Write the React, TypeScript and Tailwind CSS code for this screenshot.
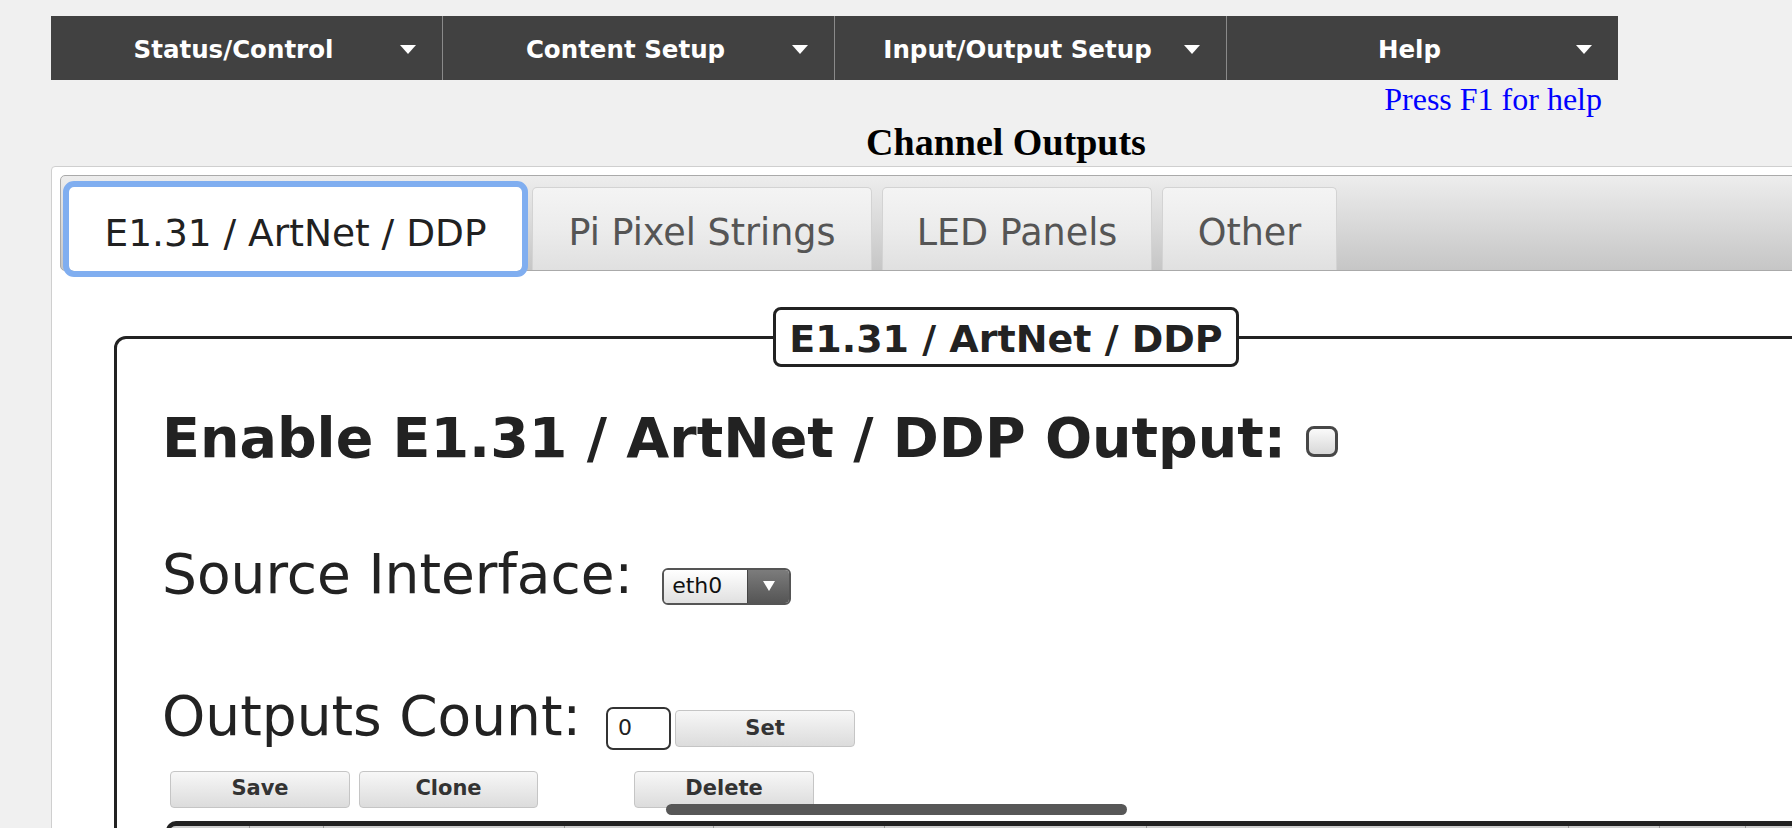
import React from 'react';

const navItems = ['Status/Control', 'Content Setup', 'Input/Output Setup', 'Help'];

const tabs = [
  { label: 'E1.31 / ArtNet / DDP', width: 'w-[453px]', active: true },
  { label: 'Pi Pixel Strings', width: 'w-[340px]', active: false },
  { label: 'LED Panels', width: 'w-[270px]', active: false },
  { label: 'Other', width: 'w-[175px]', active: false },
];

// header cells of the outputs table (only the top edge shows)
const columns = ['w-[80px]', 'w-[74px]', 'w-[241px]', 'w-[149px]', 'w-[171px]', 'w-[262px]', 'w-[422px]', 'w-[91px]', 'w-[86px]', 'w-[200px]'];

const btn =
  'flex items-center justify-center h-[37px] rounded-[4px] border border-[#c5c5c5] bg-gradient-to-b from-[#f7f7f7] to-[#dcdcdc] text-[21px] font-bold text-[#333]';

function Caret() {
  return (
    <svg width="16" height="9" viewBox="0 0 16 9">
      <path d="M0 0h16L8 9z" fill="#fff" />
    </svg>
  );
}

export default function App() {
  return (
    <div className="w-[1792px] h-[828px] overflow-hidden bg-[#f0f0f0] font-['DejaVu_Sans',sans-serif]">
      <nav className="mt-[16px] ml-[51px] w-[1567px] h-[64px] flex bg-[#414141]">
        {navItems.map((item, i) => (
          <div
            key={item}
            className={`flex-1 flex items-center pt-[3px] pl-[16px] pr-[26px] ${i > 0 ? 'border-l border-[#8a8a8a]' : ''}`}
          >
            <span className="flex-1 pt-[2px] text-center text-white font-bold text-[24.5px]">{item}</span>
            <Caret />
          </div>
        ))}
      </nav>

      <div className="mt-[1px] ml-[51px] w-[1567px] pr-[16px] text-right leading-[36px] text-[32px] text-[#0000ff] font-['Liberation_Serif',serif]">
        Press F1 for help
      </div>

      <div className="ml-[51px] w-[1910px]">
        <h2 className="mt-[6px] text-center leading-[38px] text-[38px] font-bold text-black font-['Liberation_Serif',serif]">
          Channel Outputs
        </h2>

        <div className="mt-[5px] border border-[#cfcfcf] rounded-[4px] bg-white p-[8px]">
          {/* tab strip */}
          <div className="flex items-end gap-[10px] pl-[8px] pt-[11px] border border-[#aaaaaa] rounded-[5px] bg-gradient-to-b from-[#ededed] to-[#c6c6c6]">
            {tabs.map((t) =>
              t.active ? (
                <div
                  key={t.label}
                  className={`${t.width} h-[84px] -mb-[1px] pt-[8px] flex items-center justify-center rounded-[5px] bg-white text-[37.5px] text-[#212121] outline-solid outline-[6px] outline-[#80aef0]`}
                >
                  {t.label}
                </div>
              ) : (
                <div
                  key={t.label}
                  className={`${t.width} h-[83px] pt-[8px] flex items-center justify-center rounded-t-[5px] border border-b-0 border-[#d3d3d3] bg-gradient-to-b from-[#f4f4f4] via-[#ececec] to-[#e0e0e0] text-[36.5px] text-[#555]`}
                >
                  {t.label}
                </div>
              )
            )}
          </div>

          <fieldset className="min-w-0 mt-[36px] mx-[54px] border-[3px] border-[#222] rounded-[12px] pl-[45px] pt-[39px] pr-[45px] pb-[40px] text-[#222]">
            <legend className="mx-auto border-[3px] border-[#222] rounded-[8px] bg-white px-[13px] pt-[4px] leading-[50px] text-[38px] font-bold">
              E1.31 / ArtNet / DDP
            </legend>

            <div className="leading-[64px] text-[55.5px] font-bold whitespace-nowrap">
              Enable E1.31 / ArtNet / DDP Output:
              <span className="inline-block align-baseline ml-[20px] w-[32px] h-[31px] rounded-[8px] border-[3px] border-[#474747] bg-gradient-to-b from-[#fafafa] to-[#d8d8d8]" />
            </div>

            <div className="mt-[72px] leading-[64px] text-[55px] whitespace-nowrap">
              Source Interface:
              <span className="inline-flex align-baseline ml-[29px] w-[129px] h-[37px] border-2 border-[#555] rounded-[6px] overflow-hidden">
                <span className="flex-1 flex items-center pl-[8px] text-[22px] leading-none text-[#111] bg-gradient-to-b from-white to-[#e0e0e0]">
                  eth0
                </span>
                <span className="w-[42px] flex items-center justify-center border-l border-[#444] bg-gradient-to-b from-[#7c7c7c] to-[#555]">
                  <svg width="12" height="10" viewBox="0 0 12 10">
                    <path d="M0 0h12L6 10z" fill="#fff" />
                  </svg>
                </span>
              </span>
            </div>

            <div className="mt-[78px] leading-[64px] text-[55px] whitespace-nowrap">
              Outputs Count:
              <span className="inline-flex align-baseline items-center ml-[25px] w-[65px] h-[43px] pl-[10px] border-2 border-[#333] rounded-[7px] bg-white text-[22px] leading-none">
                0
              </span>
              <span className={`inline-flex align-baseline ml-[4px] w-[180px] h-[36px] leading-none ${btn}`}>Set</span>
            </div>

            <div className="mt-[21px] flex">
              <div className={`ml-[8px] w-[180px] ${btn}`}>Save</div>
              <div className={`ml-[9px] w-[179px] ${btn}`}>Clone</div>
              <div className={`ml-[96px] w-[180px] ${btn}`}>Delete</div>
            </div>

            <div className="relative mt-[13px]">
              {/* overlay scrollbar thumb of the table scroller */}
              <div className="absolute left-[504px] -top-[17px] w-[461px] h-[11px] rounded-full bg-[#575757]" />
              <div className="ml-[4px] flex h-[40px] overflow-hidden border-t-[5px] border-l-[4px] border-[#222] rounded-tl-[10px] bg-[#cfcfcf]">
                {columns.map((w, i) => (
                  <div key={i} className={`${w} shrink-0 border-r border-[#999]`} />
                ))}
              </div>
            </div>
          </fieldset>
        </div>
      </div>
    </div>
  );
}
